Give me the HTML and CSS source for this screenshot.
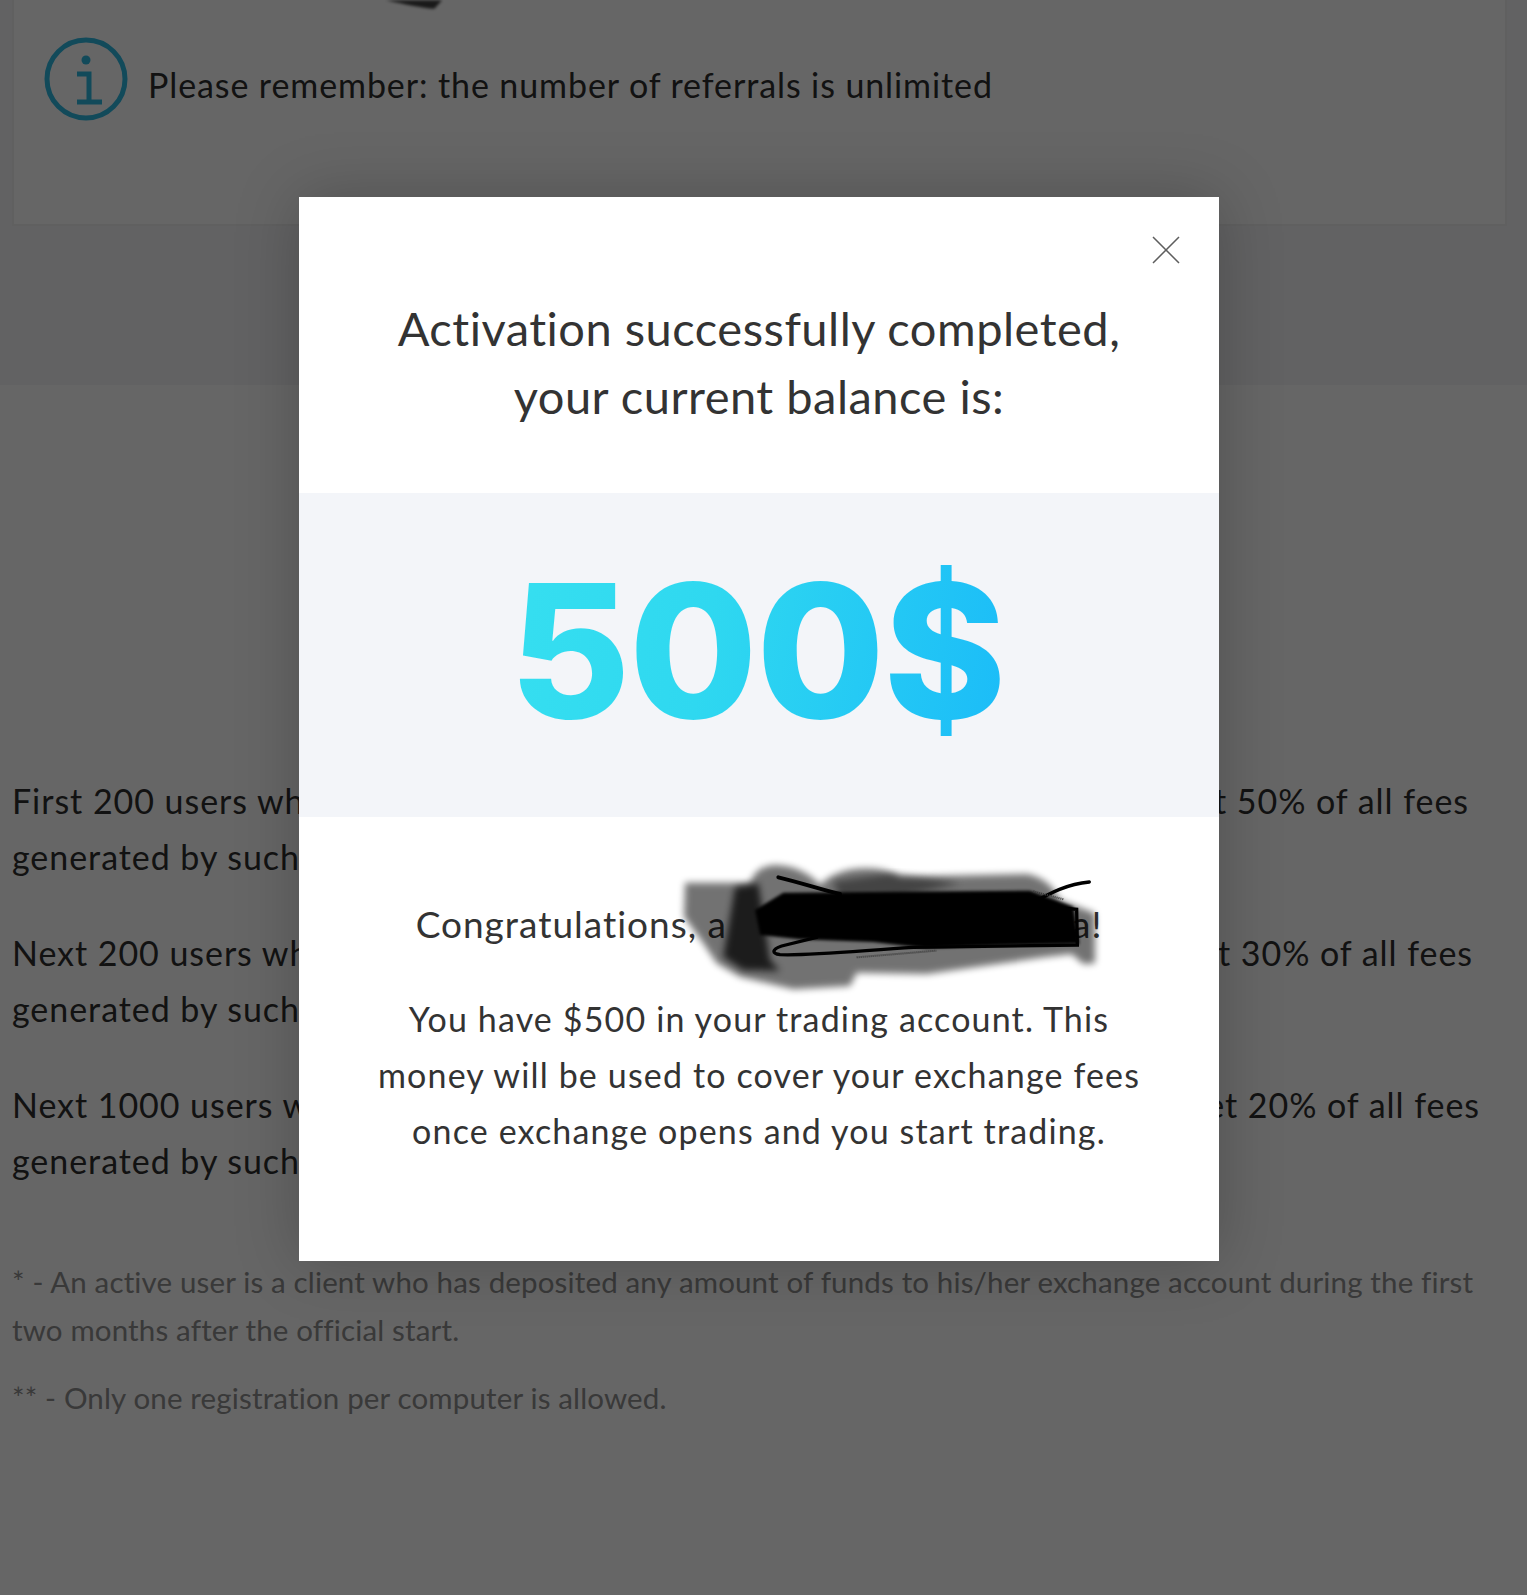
FILE: index.html
```html
<!DOCTYPE html>
<html lang="en">
<head>
<meta charset="utf-8">
<title>Activation</title>
<link rel="stylesheet" href="styles.css">
</head>
<body>
<div class="page">
  <section class="top-band">
    <div class="info-card">
      <svg class="info-icon" viewBox="0 0 84 84" aria-hidden="true">
        <circle cx="42" cy="42" r="39" fill="none" stroke="currentColor" stroke-width="5"/>
        <circle cx="42" cy="23" r="4.500" fill="currentColor"/>
        <path d="M33 37H45V65M33 65H58" fill="none" stroke="currentColor" stroke-width="5"/>
      </svg>
      <p class="info-text">Please remember: the number of referrals is unlimited</p>
    </div>
    <svg class="top-smudge" viewBox="0 0 60 10" aria-hidden="true">
      <path d="M0 0H58L50 9C38 8 18 4 0 0Z" fill="#000" opacity=".75"/>
    </svg>
  </section>

  <section class="terms">
    <div class="tier">
      <p class="tier-line tier-a"><span>First 200 users who</span><span>get 50% of all fees</span></p>
      <p class="tier-line"><span>generated by such users</span></p>
    </div>
    <div class="tier">
      <p class="tier-line tier-b"><span>Next 200 users who</span><span>get 30% of all fees</span></p>
      <p class="tier-line"><span>generated by such users</span></p>
    </div>
    <div class="tier">
      <p class="tier-line tier-c"><span>Next 1000 users who</span><span>get 20% of all fees</span></p>
      <p class="tier-line"><span>generated by such users</span></p>
    </div>
    <div class="notes">
      <p>* - An active user is a client who has deposited any amount of funds to his/her exchange account during the first two months after the official start.</p>
      <p>** - Only one registration per computer is allowed.</p>
    </div>
  </section>
</div>

<div class="overlay"></div>

<div class="modal">
  <button class="close" aria-label="Close">
    <svg viewBox="0 0 28 28" aria-hidden="true"><path d="M1 1L27 27M27 1L1 27" fill="none" stroke="#5e5e5e" stroke-width="1.500"/></svg>
  </button>
  <h2 class="modal-title">Activation successfully completed,<br>your current balance is:</h2>
  <div class="amount-band"><span class="amount">500$</span></div>
  <div class="modal-body">
    <p class="congrats">Congratulations, a<span class="name-gap"></span>a!</p>
    <p class="message">You have $500 in your trading account. This<br>money will be used to cover your exchange fees<br>once exchange opens and you start trading.</p>
    <svg class="scribble" viewBox="0 0 1380 450" aria-hidden="true">
      <defs>
        <filter id="soft" x="-10%" y="-20%" width="120%" height="140%"><feGaussianBlur stdDeviation="11"/></filter>
        <filter id="softer" x="-10%" y="-20%" width="120%" height="140%"><feGaussianBlur stdDeviation="5"/></filter>
      </defs>
      <path filter="url(#soft)" fill="#000" opacity=".55" d="M75 98L270 98Q290 45 350 45Q430 50 480 105Q530 55 620 55Q680 55 720 80L1100 72Q1170 85 1200 150L1305 190L1305 340L1270 342L1235 312L1150 322L800 372L590 368L570 408L400 418L240 380L170 340L130 280L72 200Z"/>
      <path filter="url(#soft)" fill="#000" opacity=".75" d="M225 112L295 100L330 330L360 362L250 360L190 320Z"/>
      <path filter="url(#soft)" fill="#000" opacity=".4" d="M520 95L700 70L900 100L720 140L540 140Z"/>
      <path filter="url(#softer)" fill="#000" d="M370 128L1110 122L1240 170L1258 282L1000 287L800 295L640 276L420 268L300 255L285 180Z"/>
      <g fill="none" stroke="#000" stroke-linecap="round">
        <path stroke-width="12" d="M355 82C430 100 480 118 540 132"/>
        <path stroke-width="10" d="M1288 96C1220 102 1170 130 1115 160"/>
        <path stroke-width="10" d="M1215 175L1250 178L1252 285L760 292C600 302 450 318 360 314C335 310 335 298 365 288L470 262"/>
      </g>
      <path fill="none" stroke="#3a3a3a" stroke-width="6" stroke-dasharray="3 3" d="M1120 124L1210 148M590 322L830 302"/>
    </svg>
  </div>
</div>
</body>
</html>
```
FILE: styles.css
```css
* { box-sizing: border-box; }

html, body {
  margin: 0;
  height: 1595px;
  overflow: hidden;
}

body {
  position: relative;
  background: #fff;
  color: #2e2e2e;
  font-family: "Lato", "Open Sans", sans-serif;
}

p { margin: 0; }

.page {
  height: 1595px;
  overflow: hidden;
}

.top-band {
  position: relative;
  height: 385px;
  padding: 0 20px 0 12px;
  background: #f6f6f8;
}

.info-card {
  display: flex;
  align-items: center;
  height: 226px;
  padding: 0 0 54px 30px;
  background: #fff;
  border: 2px solid #f0f0f0;
  border-top: 0;
}

.info-icon {
  flex: none;
  width: 84px;
  height: 84px;
  margin-bottom: 13px;
  color: #2fb8e2;
}

.info-text {
  margin: 0 0 0 20px;
  font-size: 34px;
  line-height: 44px;
  letter-spacing: .9px;
}

.top-smudge {
  position: absolute;
  top: 0;
  left: 386px;
  width: 58px;
  height: 10px;
  filter: blur(1.5px);
}

.terms {
  padding: 388px 0 0 12px;
}

.tier {
  margin-bottom: 40px;
  font-size: 34px;
  line-height: 56px;
  letter-spacing: .95px;
}

.tier-line {
  display: flex;
  justify-content: space-between;
}

.tier-a { padding-right: 58px; }
.tier-b { padding-right: 54px; }
.tier-c { padding-right: 47px; }

.notes {
  margin-top: 69px;
  padding-right: 40px;
  color: #8e8e8e;
  font-size: 29.500px;
  line-height: 48px;
  letter-spacing: .15px;
}

.notes p { margin-bottom: 20px; }

.overlay {
  position: absolute;
  inset: 0;
  background: rgba(0, 0, 0, .6);
}

.modal {
  position: absolute;
  top: 197px;
  left: 299px;
  width: 920px;
  height: 1064px;
  background: #fff;
  box-shadow: 0 0 60px rgba(0, 0, 0, .22);
  text-align: center;
}

.close {
  position: absolute;
  top: 39px;
  right: 39px;
  width: 28px;
  height: 28px;
  padding: 0;
  border: 0;
  background: none;
}

.close svg { display: block; }

.modal-title {
  margin: 0;
  height: 296px;
  padding-top: 97px;
  color: #333;
  font-size: 47px;
  font-weight: 400;
  line-height: 68px;
  letter-spacing: .5px;
}

.amount-band {
  display: flex;
  justify-content: center;
  align-items: center;
  height: 324px;
  padding: 0 4px 8px 0;
  background: #f3f5f9;
}

.amount {
  font-family: "Inter", sans-serif;
  font-size: 186px;
  font-weight: 800;
  line-height: 1;
  letter-spacing: -1.500px;
  background: linear-gradient(100deg, #36dff0 0%, #2fd8f0 40%, #1bbcf8 100%);
  -webkit-background-clip: text;
  background-clip: text;
  color: transparent;
}

.modal-body {
  position: relative;
  padding: 79px 0 0;
  color: #333;
  font-size: 34px;
  line-height: 56px;
  letter-spacing: 1.15px;
}

.congrats {
  margin-bottom: 39px;
  font-size: 37px;
  letter-spacing: 1px;
}

.name-gap {
  display: inline-block;
  width: 345px;
}

.scribble {
  position: absolute;
  top: 33px;
  left: 361px;
  width: 460px;
  height: 150px;
}
```
